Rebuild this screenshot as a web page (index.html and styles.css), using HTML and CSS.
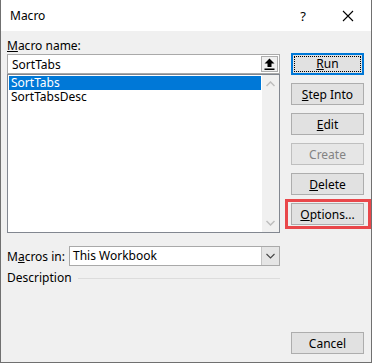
FILE: index.html
```html
<!DOCTYPE html>
<html lang="en">
<head>
  <meta charset="UTF-8">
  <meta name="viewport" content="width=device-width, initial-scale=1.0">
  <title>Macro</title>
  <link rel="stylesheet" href="styles.css">
</head>
<body>
  <div class="dialog">
    <div class="titlebar">
      <span class="title">Macro</span>
      <span class="help">?</span>
      <span class="close">
        <svg width="12" height="12" viewBox="0 0 12 12">
          <path d="M1 1 L11 11 M11 1 L1 11" stroke="#000" stroke-width="1.1" fill="none" />
        </svg>
      </span>
    </div>

    <div class="content">
      <div class="left">
        <div class="label"><u>M</u>acro name:</div>
        <div class="name-input">
          <span class="name-value">SortTabs</span>
          <span class="pick-button">
            <svg width="11" height="12" viewBox="0 0 11 12">
              <path d="M5.5 0.5 L10.5 5.5 L7.5 5.5 L7.5 9 L3.5 9 L3.5 5.5 L0.5 5.5 Z" fill="#000" />
              <rect x="0.5" y="10.5" width="10" height="1.5" fill="#000" />
            </svg>
          </span>
        </div>

        <div class="macro-list">
          <div class="rows">
            <div class="row selected">SortTabs</div>
            <div class="row">SortTabsDesc</div>
          </div>
          <div class="scrollbar">
            <svg width="9" height="6" viewBox="0 0 9 6">
              <path d="M0.5 5 L4.5 1 L8.5 5" stroke="#bdbdbd" stroke-width="1.5" fill="none" />
            </svg>
            <svg width="9" height="6" viewBox="0 0 9 6">
              <path d="M0.5 1 L4.5 5 L8.5 1" stroke="#bdbdbd" stroke-width="1.5" fill="none" />
            </svg>
          </div>
        </div>

        <div class="macros-in">
          <span class="label">M<u>a</u>cros in:</span>
          <div class="select">
            <span class="select-value">This Workbook</span>
            <span class="select-arrow">
              <svg width="9" height="6" viewBox="0 0 9 6">
                <path d="M0.5 1 L4.5 5 L8.5 1" stroke="#444" stroke-width="1.1" fill="none" />
              </svg>
            </span>
          </div>
        </div>

        <div class="description">
          <span class="label">Description</span>
          <span class="rule"></span>
        </div>
      </div>

      <div class="buttons">
        <button class="btn default"><span class="focus"><u>R</u>un</span></button>
        <button class="btn"><u>S</u>tep Into</button>
        <button class="btn"><u>E</u>dit</button>
        <button class="btn" disabled>Create</button>
        <button class="btn"><u>D</u>elete</button>
        <button class="btn highlighted"><u>O</u>ptions...</button>
        <button class="btn cancel">Cancel</button>
      </div>
    </div>
  </div>
</body>
</html>
```

FILE: styles.css
```css
body {
  margin: 0;
  font-family: 'Noto Sans', 'Open Sans', Arial, sans-serif;
  font-size: 12px;
  color: #000;
  background: #fff;
}

.dialog {
  width: 372px;
  height: 363px;
  box-sizing: border-box;
  border: 1px solid #707070;
  border-top: none;
  background: #f0f0f0;
  display: flex;
  flex-direction: column;
}

.titlebar {
  height: 31px;
  background: #fff;
  display: flex;
  align-items: center;
  flex-shrink: 0;
}

.title {
  margin-left: 9px;
  font-size: 12px;
  flex: 1;
}

.help {
  font-size: 13px;
  margin-right: 36px;
}

.close {
  display: flex;
  margin-right: 17px;
}

.content {
  flex: 1;
  display: flex;
  padding: 0 7px 8px 6px;
}

.left {
  width: 273px;
  display: flex;
  flex-direction: column;
}

.label {
  line-height: 17px;
  white-space: nowrap;
}

.left > .label {
  margin-top: 6px;
}

.name-input {
  height: 20px;
  box-sizing: border-box;
  border: 1px solid #a9a9a9;
  background: #fff;
  display: flex;
  align-items: center;
}

.name-value {
  flex: 1;
  padding-left: 4px;
}

.pick-button {
  width: 17px;
  height: 16px;
  margin-right: 1px;
  border: 1px solid #adadad;
  box-sizing: border-box;
  background: #f0f0f0;
  display: flex;
  align-items: center;
  justify-content: center;
}

.macro-list {
  height: 159px;
  box-sizing: border-box;
  border: 1px solid #828790;
  background: #fff;
  display: flex;
}

.rows {
  flex: 1;
  padding: 1px;
}

.row {
  height: 14px;
  line-height: 14px;
  padding-left: 2px;
  white-space: nowrap;
}

.row.selected {
  background: #0078d7;
  color: #fff;
}

.scrollbar {
  width: 17px;
  background: #f0f0f0;
  display: flex;
  flex-direction: column;
  justify-content: space-between;
  align-items: center;
  padding: 6px 0 6px;
}

.macros-in {
  margin-top: 13px;
  display: flex;
  align-items: center;
}

.macros-in .label {
  width: 62px;
}

.select {
  flex: 1;
  height: 20px;
  box-sizing: border-box;
  border: 1px solid #a9a9a9;
  background: #fff;
  display: flex;
}

.select-value {
  flex: 1;
  padding-left: 3px;
  line-height: 18px;
}

.select-arrow {
  width: 17px;
  background: #e5e5e5;
  border-left: 1px solid #c4c4c4;
  display: flex;
  align-items: center;
  justify-content: center;
}

.description {
  margin-top: 3px;
  display: flex;
  align-items: center;
}

.rule {
  flex: 1;
  height: 1px;
  background: #dcdcdc;
  margin-left: 6px;
  margin-top: 1px;
}

.buttons {
  width: 73px;
  margin-left: 11px;
  display: flex;
  flex-direction: column;
  gap: 8px;
  padding-top: 22px;
}

.btn {
  height: 22px;
  box-sizing: border-box;
  border: 1px solid #adadad;
  background: #e1e1e1;
  font-family: inherit;
  font-size: 12px;
  color: #000;
  padding: 0;
  position: relative;
}

.btn:disabled {
  color: #838383;
  border-color: #bfbfbf;
  background: #e6e6e6;
}

.btn.default {
  border: 2px solid #0078d7;
  padding: 1px;
}

.focus {
  display: block;
  height: 100%;
  box-sizing: border-box;
  border: 1px dotted #000;
  line-height: 14px;
}

.btn.highlighted::after {
  content: '';
  position: absolute;
  left: -7px;
  right: -8px;
  top: -5px;
  bottom: -5px;
  border: 3px solid #e9474a;
  box-sizing: border-box;
}

.btn.cancel {
  margin-top: auto;
}
```
